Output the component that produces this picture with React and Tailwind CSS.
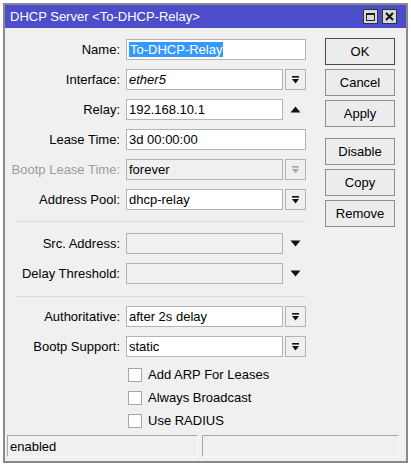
import React from 'react';

const DropIcon = ({ disabled }) => (
  <svg width="9" height="10" viewBox="0 0 9 10">
    <rect x="1" y="1" width="7" height="1.6" fill={disabled ? '#a8a8a8' : '#111'} />
    <path d="M1 4 L8 4 L4.5 8.5 Z" fill={disabled ? '#a8a8a8' : '#111'} />
  </svg>
);

const Arrow = ({ up }) => (
  <svg width="11" height="7" viewBox="0 0 11 7">
    {up ? <path d="M0.5 6.5 L10.5 6.5 L5.5 0.5 Z" fill="#111" /> : <path d="M0.5 0.5 L10.5 0.5 L5.5 6.5 Z" fill="#111" />}
  </svg>
);

function Row({ label, children, dim }) {
  return (
    <div className="flex items-center h-[21px]">
      <div className={`w-[116px] pr-[1px] text-right ${dim ? 'text-[#9c9c9c]' : 'text-black'}`}>{label}</div>
      <div className="ml-[5px] flex items-center">{children}</div>
    </div>
  );
}

function Field({ value, wide, disabled, italic, children }) {
  return (
    <div
      className={`h-[21px] ${wide ? 'w-[180px]' : 'w-[157px]'} border border-[#b4b4b4] flex items-center pl-[2px] ${
        disabled ? 'bg-[#f0f0f0]' : 'bg-white'
      } ${italic ? 'italic' : ''}`}
    >
      {children ?? value}
    </div>
  );
}

function DropBtn({ disabled }) {
  return (
    <div className="ml-[2px] w-[21px] h-[21px] border border-[#b4b4b4] bg-[#f0f0f0] flex items-center justify-center">
      <DropIcon disabled={disabled} />
    </div>
  );
}

function Side({ children }) {
  return <div className="ml-[2px] w-[21px] h-[21px] flex items-center justify-center">{children}</div>;
}

function Btn({ label, main }) {
  return (
    <div
      className={`h-[27px] w-[70px] flex items-center justify-center bg-[#ececec] border ${
        main ? 'border-[#4a4a4a]' : 'border-[#8e8e8e]'
      }`}
    >
      {label}
    </div>
  );
}

function Check({ label }) {
  return (
    <div className="flex items-center h-[23px] pl-[123px]">
      <div className="w-[14px] h-[14px] border border-[#a6a6a6] bg-white" />
      <span className="ml-[6px]">{label}</span>
    </div>
  );
}

export default function App() {
  return (
    <div className="w-[411px] h-[466px] bg-white p-[3px] font-['Liberation_Sans',Arial,sans-serif] text-[13px] leading-none text-black">
      <div className="h-full flex flex-col border-2 border-[#8a8a8a] bg-[#f0f0f0]">
        <div className="h-[23px] bg-[#4b4dca] flex items-center pl-[5px] pr-[9px] text-white">
          <span className="flex-1">DHCP Server &lt;To-DHCP-Relay&gt;</span>
          <div className="flex gap-[4px]">
            <div className="w-[15px] h-[15px] bg-[#d8d8d8] border border-[#333] flex items-center justify-center">
              <div className="w-[9px] h-[8px] border border-[#222] border-t-2" />
            </div>
            <div className="w-[15px] h-[15px] bg-[#d8d8d8] border border-[#333] flex items-center justify-center">
              <svg width="9" height="9" viewBox="0 0 9 9">
                <path d="M1 1 L8 8 M8 1 L1 8" stroke="#111" strokeWidth="2" />
              </svg>
            </div>
          </div>
        </div>

        <div className="flex-1 flex">
          <div className="flex flex-col pt-[11px]">
            <div className="flex flex-col gap-[9px]">
              <Row label="Name:">
                <Field wide>
                  <span className="bg-[#3399ff] text-white leading-[15px] px-[1px]">To-DHCP-Relay</span>
                </Field>
              </Row>
              <Row label="Interface:">
                <Field value="ether5" italic />
                <DropBtn />
              </Row>
              <Row label="Relay:">
                <Field value="192.168.10.1" />
                <Side>
                  <Arrow up />
                </Side>
              </Row>
              <Row label="Lease Time:">
                <Field value="3d 00:00:00" wide />
              </Row>
              <Row label="Bootp Lease Time:" dim>
                <Field value="forever" disabled />
                <DropBtn disabled />
              </Row>
              <Row label="Address Pool:">
                <Field value="dhcp-relay" />
                <DropBtn />
              </Row>
            </div>

            <div className="ml-[10px] mt-[11px] mb-[11px] w-[291px] h-px bg-[#dcdcdc]" />

            <div className="flex flex-col gap-[9px]">
              <Row label="Src. Address:">
                <Field disabled />
                <Side>
                  <Arrow />
                </Side>
              </Row>
              <Row label="Delay Threshold:">
                <Field disabled />
                <Side>
                  <Arrow />
                </Side>
              </Row>
            </div>

            <div className="ml-[10px] mt-[12px] mb-[9px] w-[291px] h-px bg-[#dcdcdc]" />

            <div className="flex flex-col gap-[9px]">
              <Row label="Authoritative:">
                <Field value="after 2s delay" />
                <DropBtn />
              </Row>
              <Row label="Bootp Support:">
                <Field value="static" />
                <DropBtn />
              </Row>
            </div>

            <div className="mt-[6px] flex flex-col">
              <Check label="Add ARP For Leases" />
              <Check label="Always Broadcast" />
              <Check label="Use RADIUS" />
            </div>
          </div>

          <div className="ml-[19px] pt-[10px] flex flex-col">
            <div className="flex flex-col gap-[4px]">
              <Btn label="OK" main />
              <Btn label="Cancel" />
              <Btn label="Apply" />
            </div>
            <div className="mt-[11px] flex flex-col gap-[4px]">
              <Btn label="Disable" />
              <Btn label="Copy" />
              <Btn label="Remove" />
            </div>
          </div>
        </div>

        <div className="flex gap-[4px] pl-[2px] pr-[7px] pb-[4px]">
          <div className="w-[191px] h-[22px] border-t border-l border-[#a8a8a8] border-b border-b-[#fafafa] border-r border-r-[#fafafa] flex items-center pl-[2px]">
            enabled
          </div>
          <div className="flex-1 h-[22px] border-t border-l border-[#a8a8a8] border-b border-b-[#fafafa] border-r border-r-[#fafafa]" />
        </div>
      </div>
    </div>
  );
}
